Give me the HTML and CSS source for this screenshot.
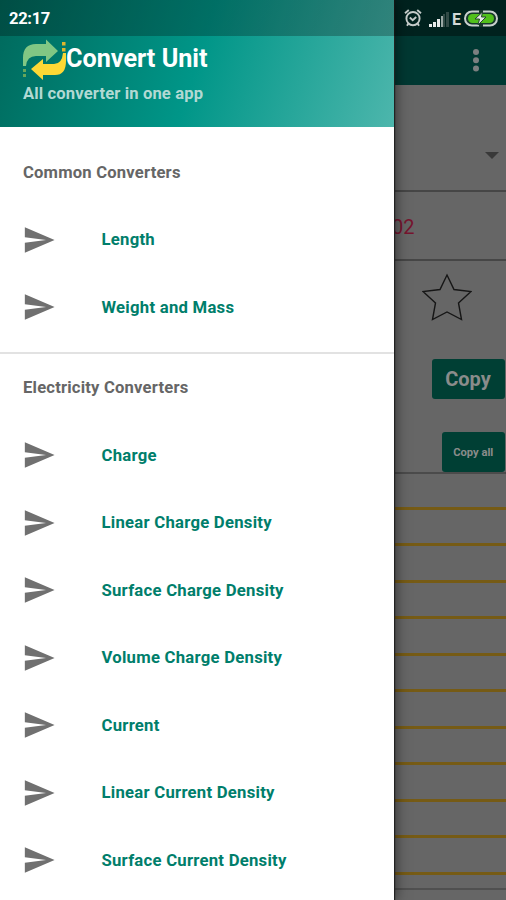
FILE: index.html
```
<!DOCTYPE html>
<html lang="en">
<head>
<meta charset="utf-8">
<title>Convert Unit</title>
<link rel="stylesheet" href="styles.css">
</head>
<body>
<svg class="defs" aria-hidden="true"><symbol id="send" viewBox="0 0 24 24"><path d="M2.01 21 23 12 2.01 3 2 10l15 2-15 2z"/></symbol></svg>
<div class="phone">
  <main class="page">
    <div class="toolbar">
      <svg class="more" viewBox="0 0 8 24"><circle cx="4" cy="4" r="3"/><circle cx="4" cy="12.2" r="3"/><circle cx="4" cy="20.4" r="3"/></svg>
    </div>
    <div class="unit-select"><span class="caret"></span></div>
    <div class="result"><span>02</span></div>
    <div class="favorite">
      <svg viewBox="0 0 50 48"><path d="M25 2 32 16.5 49 18.5 36.5 30 39.5 46.5 25 39 10.5 46.5 13.5 30 1 18.5 18 16.5Z"/></svg>
    </div>
    <div class="actions">
      <span class="button copy">Copy</span>
      <span class="button copy-all">Copy all</span>
    </div>
    <div class="values">
      <div class="value"></div><div class="value"></div><div class="value"></div><div class="value"></div><div class="value"></div><div class="value"></div><div class="value"></div><div class="value"></div><div class="value"></div><div class="value"></div><div class="value"></div>
    </div>
  </main>
  <nav class="drawer">
    <header class="drawer-header">
      <div class="brand">
        <svg class="logo" viewBox="0 0 44 42">
          <path fill="#81c784" d="M0 28V20Q0 6 13 6H23V1.500L35 13 23 24V18H13Q4 18 3 28Z"/>
          <path fill="#fdd835" d="M43 15V23Q43 37 32 37H20V42L8 31 20 21V26H31Q39 26 40 15Z"/>
          <path fill="#66a65b" d="M0 31h3v3H0zM0 36h3v3H0z"/>
          <path fill="#e0b62d" d="M39 4h3.500v3.500h-3.500zM39 10h3.500v3.500h-3.500z"/>
        </svg>
        <h1>Convert Unit</h1>
      </div>
      <p>All converter in one app</p>
    </header>
    <section class="group">
      <h2>Common Converters</h2>
      <ul>
        <li><svg><use href="#send"/></svg><span>Length</span></li>
        <li><svg><use href="#send"/></svg><span>Weight and Mass</span></li>
      </ul>
    </section>
    <section class="group">
      <h2>Electricity Converters</h2>
      <ul>
        <li><svg><use href="#send"/></svg><span>Charge</span></li>
        <li><svg><use href="#send"/></svg><span>Linear Charge Density</span></li>
        <li><svg><use href="#send"/></svg><span>Surface Charge Density</span></li>
        <li><svg><use href="#send"/></svg><span>Volume Charge Density</span></li>
        <li><svg><use href="#send"/></svg><span>Current</span></li>
        <li><svg><use href="#send"/></svg><span>Linear Current Density</span></li>
        <li><svg><use href="#send"/></svg><span>Surface Current Density</span></li>
      </ul>
    </section>
  </nav>
  <div class="status">
    <span class="time">22:17</span>
    <svg class="alarm" viewBox="0 0 18 18"><g fill="none" stroke="#c4cbc9" stroke-width="1.9"><circle cx="9" cy="9.6" r="6.6"/><path d="M1 4.2 4.8 1M17 4.2 13.2 1M5.8 8.5 8.7 11.2 12.2 8M4.4 14.5 3 16.7M13.6 14.5 15 16.7"/></g></svg>
    <svg class="signal" viewBox="0 0 20 15"><path fill="#e6eae9" d="M0 12h3v3H0zM4 10h3v5H4zM8 7h3v8H8z"/><path fill="#9aa8a5" d="M12 4h2v11h-2z"/><path fill="#314a46" d="M14 2h2v13h-2zM17 0h3v15h-3z"/></svg>
    <span class="network">E</span>
    <svg class="battery" viewBox="0 0 34 17"><rect x="1" y="1.5" width="32" height="14" rx="7" fill="#17382b" stroke="#c9cfcd" stroke-width="2"/><rect x="4" y="4" width="26" height="9" rx="4.5" fill="#51c01b"/><path d="M17 0v4M17 13v4" stroke="#17382b" stroke-width="4"/><path d="M18.500 2 11 9h4.500l-1.500 6 8-8h-4.500z" fill="#e5ebe4" stroke="#24452f" stroke-width="1"/></svg>
  </div>
</div>
</body>
</html>
```

FILE: styles.css
```
* { box-sizing: border-box; }
body { margin: 0; font-family: Roboto, "Liberation Sans", sans-serif; }
h1, h2, p, ul { margin: 0; padding: 0; }
ul { list-style: none; }
.defs { position: absolute; width: 0; height: 0; }

.phone {
  display: grid;
  grid-template: 900px / 506px;
  width: 506px;
  height: 900px;
  overflow: hidden;
}
.page, .drawer, .status { grid-area: 1 / 1; }

.page {
  display: flex;
  flex-direction: column;
  background: #666;
}
.toolbar {
  flex: 0 0 85px;
  display: flex;
  justify-content: flex-end;
  padding: 48px 26px 0 0;
  background: #003832;
}
.more { width: 8px; height: 24px; fill: #7c7f80; }
.unit-select {
  flex: 0 0 107px;
  display: flex;
  justify-content: flex-end;
  padding: 67px 7px 0 0;
  border-bottom: 2px solid #464646;
}
.caret {
  width: 14px;
  height: 7px;
  background: #393939;
  clip-path: polygon(0 0, 100% 0, 50% 100%);
}
.result {
  flex: 0 0 69px;
  padding: 23px 0 0 392px;
  border-bottom: 2px solid #464646;
  color: #77152f;
  font-size: 20px;
  line-height: 24px;
}
.favorite { flex: 0 0 98px; padding: 12px 0 0 422px; }
.favorite svg { width: 50px; height: 48px; display: block; }
.favorite path { fill: none; stroke: #161616; stroke-width: 1.4; }
.actions {
  flex: 0 0 115px;
  display: flex;
  flex-direction: column;
  align-items: flex-end;
  gap: 33px;
  padding-right: 1.5px;
  border-bottom: 2px solid #4b4b4b;
}
.button {
  display: flex;
  align-items: center;
  justify-content: center;
  height: 40px;
  border-radius: 3px;
  background: #003f34;
  color: #8a8c8b;
  font-weight: 700;
}
.copy { width: 73px; font-size: 20px; }
.copy-all { width: 62.5px; font-size: 11.2px; }
.values { height: 415.5px; border-bottom: 2px solid #505050; }
.value { height: 36.55px; border-bottom: 3px solid #765b15; }
.value:first-child { height: 35.5px; }

.drawer {
  width: 394px;
  z-index: 1;
  background: #fff;
  box-shadow: 1px 0 1px #222, 2px 0 12px rgba(0, 0, 0, .5);
}
.drawer-header {
  height: 127px;
  padding: 38px 23px 0;
  background: linear-gradient(107.9deg, #00695c, #009688 50%, #4db6ac);
  color: #fff;
}
.brand { display: flex; height: 42px; }
.logo { width: 44px; height: 42px; flex: none; }
.brand h1 { margin-left: -1px; font-size: 25.2px; font-weight: 700; line-height: 41px; white-space: nowrap; }
.drawer-header p { margin-top: 4px; font-size: 16.6px; font-weight: 700; letter-spacing: .13px; line-height: 20px; color: #b2d9d3; }

.group { padding-top: 11px; height: 225px; }
.group + .group { height: auto; border-top: 2px solid #e2e2e2; padding-top: 0; }
h2 {
  height: 68px;
  padding-left: 23px;
  font-size: 16.6px;
  font-weight: 700;
  letter-spacing: .2px;
  line-height: 69px;
  color: #666;
}
.group + .group h2 { height: 67.5px; line-height: 68px; }
li {
  display: flex;
  align-items: center;
  height: 67.5px;
  padding-left: 22px;
  color: #007e6b;
  font-size: 16.7px;
  font-weight: 700;
  letter-spacing: .25px;
}
li svg { width: 34px; height: 34px; margin-right: 45.5px; fill: #707070; }

.status {
  z-index: 2;
  display: flex;
  align-items: center;
  height: 36px;
  padding-left: 9px;
  background: linear-gradient(to right, rgba(0, 0, 0, .26) 394px, rgba(0, 0, 0, .4) 394px);
  color: #fff;
  font-weight: 700;
}
.time { width: 395px; font-size: 16.5px; letter-spacing: -.3px; }
.alarm { width: 18px; height: 18px; }
.signal { width: 20px; height: 15px; margin: 2px 0 0 7px; }
.network { width: 11px; margin: 2px 0 0 3px; font-size: 16px; color: #d3d9d7; }
.battery { width: 34px; height: 17px; margin-left: 1px; }
```
